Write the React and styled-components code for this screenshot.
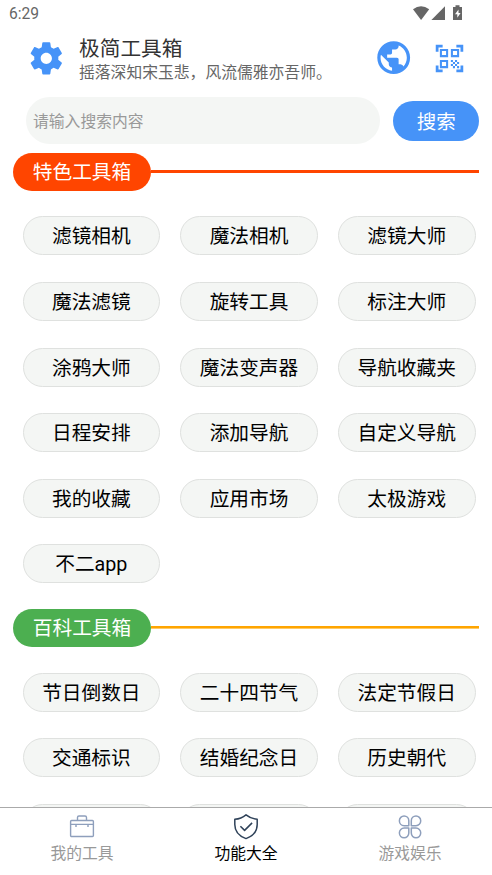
import React from "react";
import styled, { createGlobalStyle } from "styled-components";
import { MdPublic, MdQrCodeScanner } from "react-icons/md";

const GlobalStyle = createGlobalStyle`
  * { box-sizing: border-box; }
  body { margin: 0; background: #fff; overflow: hidden; }
  button, input { font: inherit; }
`;

const Screen = styled.div`
  display: flex;
  flex-direction: column;
  width: 492px;
  height: 875px;
  overflow: hidden;
  background: #fff;
  font-family: Roboto, "Noto Sans CJK SC", sans-serif;
`;

const StatusBar = styled.div`
  display: flex;
  align-items: center;
  justify-content: space-between;
  flex: none;
  height: 27px;
  padding: 0 30px 0 9px;
  color: #666;
  font-size: 15.6px;
`;

const StatusTime = styled.span`
  padding-top: 1px;
`;

const StatusIcons = styled.svg`
  display: block;
  width: 50px;
  height: 27px;
`;

const Header = styled.header`
  display: flex;
  align-items: center;
  flex: none;
  height: 62px;
  padding: 0 26px;
  color: #4693f8;
`;

const Titles = styled.div`
  flex: 1;
  margin-left: 13px;
  padding-top: 3px;
  white-space: nowrap;
`;

const Title = styled.h1`
  margin: 0;
  color: #333;
  font-size: 20.7px;
  font-weight: 400;
  line-height: 26px;
`;

const Subtitle = styled.p`
  margin: 0;
  color: #666;
  font-size: 15.8px;
  line-height: 22px;
`;

const IconSlot = styled.span`
  display: flex;
  align-items: center;
  justify-content: center;
  width: ${(p) => p.$width}px;
  height: 40px;
  flex: none;
`;

const Actions = styled.div`
  display: flex;
  align-items: center;
  gap: 19.5px;
`;

const SearchRow = styled.div`
  display: flex;
  align-items: center;
  flex: none;
  gap: 13px;
  height: 63.5px;
  padding: 0 13px 0 26px;
`;

const SearchInput = styled.input`
  width: 354.3px;
  height: 47px;
  padding: 1px 8px 0 7px;
  border: 0;
  border-radius: 24px;
  outline: 0;
  background: #f4f6f4;
  font-size: 15.8px;
  &::placeholder { color: #999; opacity: 1; }
`;

const SearchButton = styled.button`
  flex: 1;
  height: 40px;
  padding: 0;
  border: 0;
  border-radius: 20px;
  background: #4693f8;
  color: #fff;
  font-size: 19.5px;
`;

const Content = styled.main`
  flex: 1;
  min-height: 0;
  overflow: hidden;
`;

const SectionHead = styled.div`
  display: flex;
  align-items: center;
  height: 38px;
  margin: 0 13px;
`;

const Badge = styled.h2`
  width: 138px;
  height: 38px;
  margin: 0;
  border-radius: 19px;
  background: ${(p) => p.$color};
  color: #fff;
  font-size: 19.7px;
  font-weight: 400;
  line-height: 39px;
  text-align: center;
`;

const Rule = styled.div`
  flex: 1;
  height: 3px;
  background: ${(p) => p.$color};
`;

const ChipGrid = styled.div`
  display: grid;
  grid-template-columns: repeat(3, 137.7px);
  grid-auto-rows: 39px;
  gap: 26.6px 20px;
  padding: 25.9px 0 25.6px 22.5px;
`;

const Chip = styled.button`
  padding: 2px 0 0;
  border: 1px solid #dfe1df;
  border-radius: 20px;
  background: #f4f6f4;
  color: #000;
  font-size: 19.7px;
  line-height: 36px;
  white-space: nowrap;
`;

const NavBar = styled.nav`
  display: grid;
  grid-template-columns: repeat(3, 1fr);
  flex: none;
  height: 68px;
  border-top: 1px solid #aaa;
  background: #fff;
`;

const NavItem = styled.div`
  display: flex;
  flex-direction: column;
  align-items: center;
  padding-top: 5px;
  color: ${(p) => (p.$active ? "#000" : "#999")};
  font-size: 15.8px;
  line-height: 26px;
  svg {
    display: block;
    width: 28px;
    height: 28px;
    fill: none;
    stroke: ${(p) => (p.$active ? "#2f4259" : "#8e9fbc")};
  }
`;

const sections = [
  {
    title: "特色工具箱", color: "#ff4500", line: "#ff4500",
    items: ["滤镜相机", "魔法相机", "滤镜大师", "魔法滤镜", "旋转工具", "标注大师", "涂鸦大师", "魔法变声器", "导航收藏夹", "日程安排", "添加导航", "自定义导航", "我的收藏", "应用市场", "太极游戏", "不二app"],
  },
  {
    title: "百科工具箱", color: "#4caf50", line: "linear-gradient(#ffa500 0 2px, #ffca66 2px)",
    items: ["节日倒数日", "二十四节气", "法定节假日", "交通标识", "结婚纪念日", "历史朝代", "", "", ""],
  },
];

const Gear = () => (
  <svg width="38.6" height="38.6" viewBox="0 0 24 24" fill="currentColor">
    <path d="M19.43 12.98c.04-.32.07-.64.07-.98s-.03-.66-.07-.98l2.11-1.65c.19-.15.24-.42.12-.64l-2-3.46c-.12-.22-.39-.3-.61-.22l-2.49 1c-.52-.4-1.08-.73-1.69-.98l-.38-2.65C14.46 2.18 14.25 2 14 2h-4c-.25 0-.46.18-.49.42l-.38 2.65c-.61.25-1.17.59-1.69.98l-2.49-1c-.23-.09-.49 0-.61.22l-2 3.46c-.13.22-.07.49.12.64l2.11 1.65c-.04.32-.07.65-.07.98s.03.66.07.98l-2.11 1.65c-.19.15-.24.42-.12.64l2 3.46c.12.22.39.3.61.22l2.49-1c.52.4 1.08.73 1.69.98l.38 2.65c.03.24.24.42.49.42h4c.25 0 .46-.18.49-.42l.38-2.65c.61-.25 1.17-.59 1.69-.98l2.49 1c.23.09.49 0 .61-.22l2-3.46c.12-.22.07-.49-.12-.64l-2.11-1.65zM12 15.5c-1.93 0-3.5-1.57-3.5-3.5s1.57-3.5 3.5-3.5 3.5 1.57 3.5 3.5-1.57 3.5-3.5 3.5z" />
  </svg>
);

const Briefcase = () => (
  <svg viewBox="0 0 28 28" strokeWidth="1.4">
    <rect x="2.6" y="7.5" width="22.8" height="16" rx="1" />
    <path d="M9.5 7.5V4.5q0-1.5 1.5-1.5h6q1.5 0 1.5 1.5v3M2.6 11.4h22.8M8 12v2M20 12v2" />
  </svg>
);

const Shield = () => (
  <svg viewBox="0 0 28 28" strokeWidth="1.5" strokeLinejoin="round">
    <path d="M14 1.8C10.8 4.4 7 5.9 2.8 6.3v5.2c0 6.5 4 11.5 11.2 14.1 7.2-2.6 11.2-7.6 11.2-14.1V6.3C21 5.9 17.2 4.4 14 1.8z" />
    <path d="M8.4 13.2l4.2 4.2 7.5-7.5" />
  </svg>
);

const Clover = () => (
  <svg viewBox="0 0 28 28" strokeWidth="1.5" strokeLinejoin="round">
    <path d="M12.8 12.7V7.7A4.7 4.7 0 0 0 8.1 3a4.7 4.7 0 0 0-4.7 4.7v.3a4.7 4.7 0 0 0 4.7 4.7z" />
    <path d="M15.3 12.7V7.7A4.7 4.7 0 0 1 20 3a4.7 4.7 0 0 1 4.7 4.7v.3a4.7 4.7 0 0 1-4.7 4.7z" />
    <path d="M12.8 15.1v5a4.7 4.7 0 0 1-4.7 4.7 4.7 4.7 0 0 1-4.7-4.7v-.3a4.7 4.7 0 0 1 4.7-4.7z" />
    <path d="M15.3 15.1v5a4.7 4.7 0 0 0 4.7 4.7 4.7 4.7 0 0 0 4.7-4.7v-.3a4.7 4.7 0 0 0-4.7-4.7z" />
  </svg>
);

export default function App() {
  return (
    <Screen>
      <GlobalStyle />
      <StatusBar>
        <StatusTime>6:29</StatusTime>
        <StatusIcons viewBox="0 0 50 27" fill="#666">
          <path d="M1 9.3Q9 3 17.2 9.3L9.1 20z" />
          <path d="M33 6.3V20H19.4z" />
          <path d="M43.5 5.3h4V7H50v13h-9V7h2.5z" />
          <path d="M46.5 9.5L43 14.3h2.3v3.5l3.3-4.9h-2.1z" fill="#fff" />
        </StatusIcons>
      </StatusBar>
      <Header>
        <IconSlot $width={40}><Gear /></IconSlot>
        <Titles>
          <Title>极简工具箱</Title>
          <Subtitle>摇落深知宋玉悲，风流儒雅亦吾师。</Subtitle>
        </Titles>
        <Actions>
          <IconSlot $width={40}><MdPublic size={39.4} /></IconSlot>
          <IconSlot $width={33}><MdQrCodeScanner size={33} /></IconSlot>
        </Actions>
      </Header>
      <SearchRow>
        <SearchInput placeholder="请输入搜索内容" />
        <SearchButton>搜索</SearchButton>
      </SearchRow>
      <Content>
        {sections.map((s) => (
          <section key={s.title}>
            <SectionHead>
              <Badge $color={s.color}>{s.title}</Badge>
              <Rule $color={s.line} />
            </SectionHead>
            <ChipGrid>
              {s.items.map((item, i) => <Chip key={i}>{item}</Chip>)}
            </ChipGrid>
          </section>
        ))}
      </Content>
      <NavBar>
        <NavItem><Briefcase />我的工具</NavItem>
        <NavItem $active><Shield />功能大全</NavItem>
        <NavItem><Clover />游戏娱乐</NavItem>
      </NavBar>
    </Screen>
  );
}
